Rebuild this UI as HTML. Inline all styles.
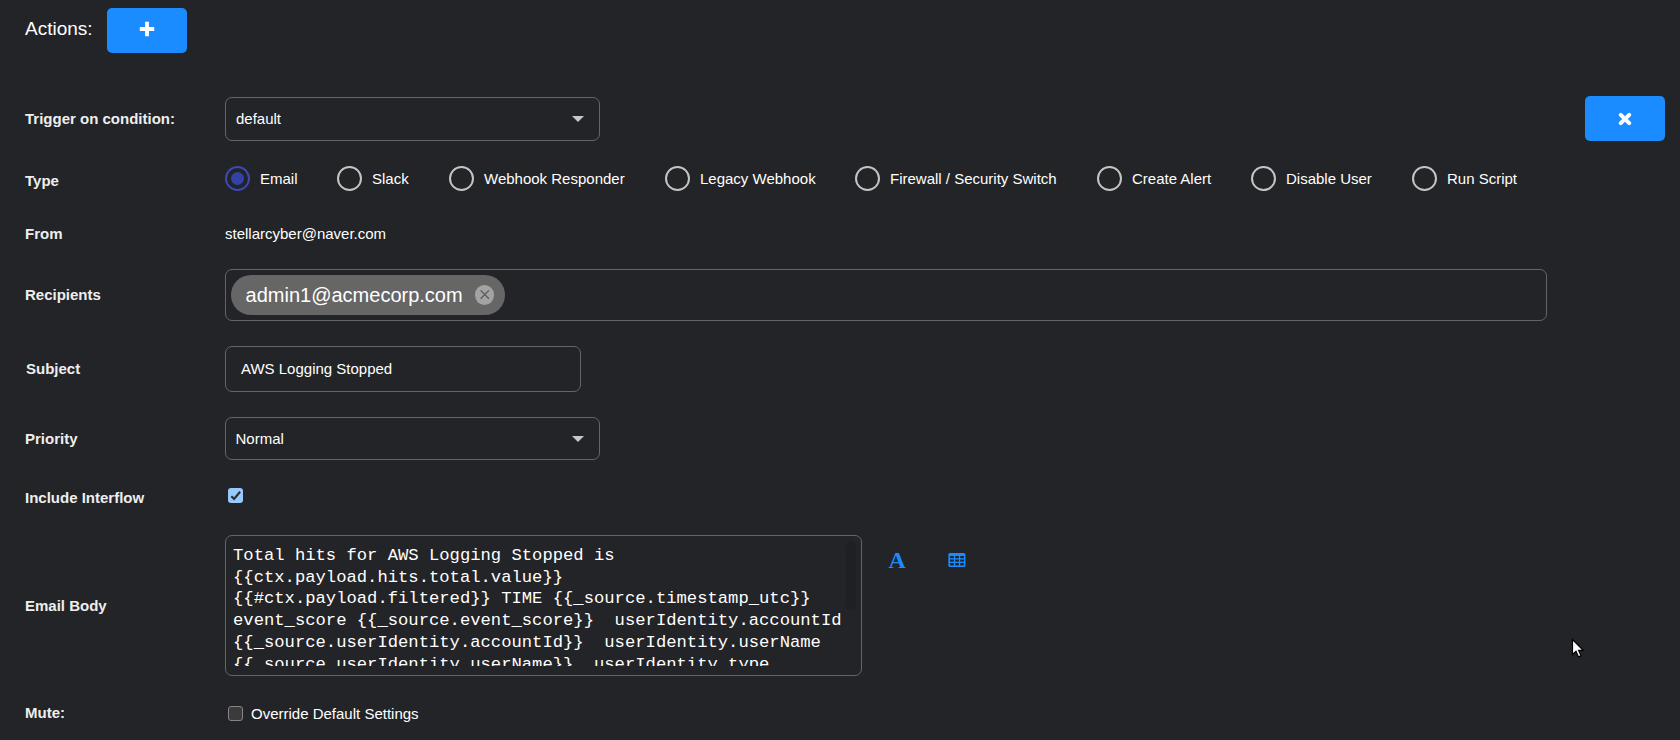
<!DOCTYPE html>
<html>
<head>
<meta charset="utf-8">
<style>
html,body{margin:0;padding:0;}
body{width:1680px;height:740px;overflow:hidden;background:#232427;position:relative;font-family:"Liberation Sans",sans-serif;color:#fff;color-scheme:dark;}
.t{position:absolute;white-space:pre;line-height:20px;}
.lb{font-weight:bold;font-size:15px;color:#eeeeee;}
.v{font-size:15px;color:#ffffff;}
.btn{position:absolute;background:#1a8cff;border-radius:5px;}
.box{position:absolute;box-sizing:border-box;border:1px solid #62666a;border-radius:7px;}
.arrow{position:absolute;width:0;height:0;border-left:6px solid transparent;border-right:6px solid transparent;border-top:6px solid #c8c8c8;}
.radio{position:absolute;box-sizing:border-box;width:25px;height:25px;border-radius:50%;border:2px solid #c4c4c4;top:166px;}
.radio.on{border-color:#3b49b6;}
.radio.on::after{content:"";position:absolute;left:4px;top:4px;width:13px;height:13px;border-radius:50%;background:#3442a8;}
.rl{top:169px;}
.cb{position:absolute;box-sizing:border-box;width:15px;height:15px;border-radius:3px;}
.mono{position:absolute;font-family:"Liberation Mono",monospace;font-size:17.2px;line-height:21.7px;white-space:pre;color:#fff;}
</style>
</head>
<body>
<!-- Actions -->
<div class="t" style="left:25px;top:19px;font-size:19px;line-height:20px;">Actions:</div>
<div class="btn" style="left:107px;top:8px;width:80px;height:45px;">
  <svg style="position:absolute;left:32px;top:13px" width="16" height="16" viewBox="0 0 16 16"><path d="M8 0.8V15.2M0.8 8H15.2" stroke="#fff" stroke-width="3.8" stroke-linecap="butt"/></svg>
</div>

<!-- Trigger -->
<div class="t lb" style="left:25px;top:109px;">Trigger on condition:</div>
<div class="box" style="left:225px;top:97px;width:375px;height:44px;"></div>
<div class="t v" style="left:236px;top:109px;">default</div>
<div class="arrow" style="left:572px;top:116px;"></div>
<div class="btn" style="left:1585px;top:96px;width:80px;height:45px;">
  <svg style="position:absolute;left:33px;top:16px" width="14" height="14" viewBox="0 0 14 14"><path d="M2.8 2.8L11.2 11.2M11.2 2.8L2.8 11.2" stroke="#fff" stroke-width="4" stroke-linecap="round"/></svg>
</div>

<!-- Type -->
<div class="t lb" style="left:25px;top:171px;">Type</div>
<div class="radio on" style="left:225px;"></div><div class="t v rl" style="left:260px;">Email</div>
<div class="radio" style="left:337px;"></div><div class="t v rl" style="left:372px;">Slack</div>
<div class="radio" style="left:449px;"></div><div class="t v rl" style="left:484px;">Webhook Responder</div>
<div class="radio" style="left:665px;"></div><div class="t v rl" style="left:700px;">Legacy Webhook</div>
<div class="radio" style="left:855px;"></div><div class="t v rl" style="left:890px;">Firewall / Security Switch</div>
<div class="radio" style="left:1097px;"></div><div class="t v rl" style="left:1132px;">Create Alert</div>
<div class="radio" style="left:1251px;"></div><div class="t v rl" style="left:1286px;">Disable User</div>
<div class="radio" style="left:1412px;"></div><div class="t v rl" style="left:1447px;">Run Script</div>

<!-- From -->
<div class="t lb" style="left:25px;top:224px;">From</div>
<div class="t v" style="left:225px;top:224px;">stellarcyber@naver.com</div>

<!-- Recipients -->
<div class="t lb" style="left:25px;top:285px;">Recipients</div>
<div class="box" style="left:225px;top:269px;width:1322px;height:52px;"></div>
<div style="position:absolute;left:231px;top:275px;width:274px;height:40px;border-radius:20px;background:#666666;"></div>
<div class="t" style="left:245.6px;top:285px;font-size:20px;line-height:20px;">admin1@acmecorp.com</div>
<div style="position:absolute;left:474.5px;top:285px;width:19.5px;height:19.5px;border-radius:50%;background:#a3a3a3;">
  <svg style="position:absolute;left:0;top:0" width="19.5" height="19.5" viewBox="0 0 19.5 19.5"><path d="M5.6 5.4L13.9 13.7M13.9 5.4L5.6 13.7" stroke="#5a5a5a" stroke-width="1.3"/></svg>
</div>

<!-- Subject -->
<div class="t lb" style="left:26px;top:359px;">Subject</div>
<div class="box" style="left:225px;top:346px;width:356px;height:46px;"></div>
<div class="t v" style="left:241px;top:359px;">AWS Logging Stopped</div>

<!-- Priority -->
<div class="t lb" style="left:25px;top:429px;">Priority</div>
<div class="box" style="left:225px;top:417px;width:375px;height:43px;"></div>
<div class="t v" style="left:235.5px;top:429px;">Normal</div>
<div class="arrow" style="left:572px;top:436px;"></div>

<!-- Include Interflow -->
<div class="t lb" style="left:25px;top:488px;">Include Interflow</div>
<div class="cb" style="left:228px;top:488px;background:#99c8ff;">
  <svg style="position:absolute;left:0;top:0" width="15" height="15" viewBox="0 0 15 15"><path d="M3.3 8.2L6.1 10.9L12.1 3.8" stroke="#2f2f2f" stroke-width="2.2" fill="none"/></svg>
</div>

<!-- Email Body -->
<div class="t lb" style="left:25px;top:596px;">Email Body</div>
<div class="box" style="left:225px;top:535px;width:637px;height:141px;"></div>
<div style="position:absolute;left:233px;top:545px;width:612px;height:121px;overflow:hidden;">
<div class="mono" style="left:0;top:0;">Total hits for AWS Logging Stopped is
{{ctx.payload.hits.total.value}}
{{#ctx.payload.filtered}} TIME {{_source.timestamp_utc}}
event_score {{_source.event_score}}  userIdentity.accountId
{{_source.userIdentity.accountId}}  userIdentity.userName
{{_source.userIdentity.userName}}  userIdentity.type</div>
</div>
<div style="position:absolute;left:846px;top:541px;width:10px;height:69px;border-radius:5px;background:#1f2023;"></div>
<div class="t" style="left:888.5px;top:548px;font-family:'Liberation Serif',serif;font-weight:bold;font-size:24px;line-height:24px;color:#1a8cff;">A</div>
<svg style="position:absolute;left:948px;top:552px" width="18" height="16" viewBox="0 0 18 16">
  <rect x="0.4" y="1" width="17" height="14" rx="1.5" fill="#1a8cff"/>
  <g fill="#232427">
    <rect x="2.1" y="4" width="3.7" height="2.2"/><rect x="7.2" y="4" width="3.7" height="2.2"/><rect x="12.2" y="4" width="3.7" height="2.2"/>
    <rect x="2.1" y="7.5" width="3.7" height="2.2"/><rect x="7.2" y="7.5" width="3.7" height="2.2"/><rect x="12.2" y="7.5" width="3.7" height="2.2"/>
    <rect x="2.1" y="11" width="3.7" height="2.4"/><rect x="7.2" y="11" width="3.7" height="2.4"/><rect x="12.2" y="11" width="3.7" height="2.4"/>
  </g>
</svg>

<!-- Mute -->
<div class="t lb" style="left:25px;top:703px;">Mute:</div>
<div class="cb" style="left:228px;top:705.5px;background:#3b3b3b;border:1.5px solid #858585;"></div>
<div class="t v" style="left:251px;top:704px;">Override Default Settings</div>

<!-- cursor -->
<svg style="position:absolute;left:1571px;top:638px" width="14" height="21" viewBox="0 0 14 21">
  <path d="M1.5 1.5V16.5L5 13.2L7.4 18.8L10 17.8L7.6 12.4H12.2Z" fill="#fff" stroke="#000" stroke-width="1.2" stroke-linejoin="miter"/>
</svg>
</body>
</html>
